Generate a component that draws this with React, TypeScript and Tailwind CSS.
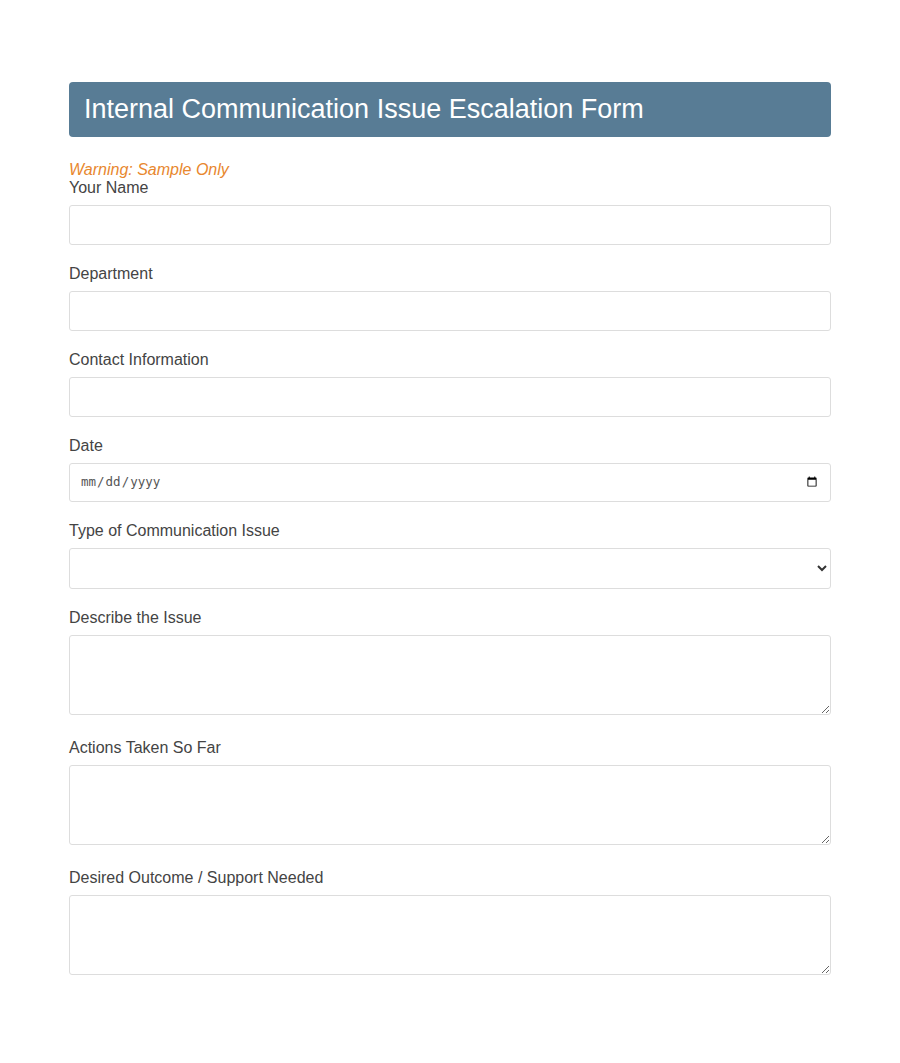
import React from "react"

const fields = [
    { label: "Your Name", kind: "text" },
    { label: "Department", kind: "text" },
    { label: "Contact Information", kind: "text" },
    { label: "Date", kind: "date" },
    { label: "Type of Communication Issue", kind: "select" },
    { label: "Describe the Issue", kind: "textarea" },
    { label: "Actions Taken So Far", kind: "textarea" },
    { label: "Desired Outcome / Support Needed", kind: "textarea" },
]

const boxClass =
    "block w-full border border-[#dddddd] rounded-[3px] bg-white px-[10px] text-[#333] outline-none"

export default function App() {
    return (
        <div className="min-h-screen bg-white font-['Liberation_Sans',Arial,sans-serif] pt-[82px] pb-[60px]">
            <div className="w-[762px] ml-[69px]">
                <div className="h-[55px] bg-[#587c95] rounded-[4px] flex items-center px-[15px]">
                    <h1 className="text-white text-[27px] leading-none">Internal Communication Issue Escalation Form</h1>
                </div>

                <p className="mt-[24px] italic text-[#e8872e] text-[16px] leading-[18px]">Warning: Sample Only</p>

                <form>
                    {fields.map((f, i) => (
                        <div key={i} className={f.kind === "textarea" ? "mb-[24px]" : "mb-[20px]"}>
                            <label className="block text-[16px] leading-[18px] text-[#444] mb-[8px]">{f.label}</label>
                            {f.kind === "text" && <input type="text" className={`${boxClass} h-[40px] text-[16px]`} />}
                            {f.kind === "date" && (
                                <input
                                    type="date"
                                    className={`${boxClass} h-[39px] font-['DejaVu_Sans_Mono',monospace] text-[12.5px] text-[#555]`}
                                />
                            )}
                            {f.kind === "select" && (
                                <select className={`${boxClass} h-[41px] text-[16px] appearance-auto`}>
                                    <option></option>
                                </select>
                            )}
                            {f.kind === "textarea" && <textarea className={`${boxClass} h-[80px] text-[16px] resize-y`} />}
                        </div>
                    ))}
                </form>
            </div>
        </div>
    )
}
